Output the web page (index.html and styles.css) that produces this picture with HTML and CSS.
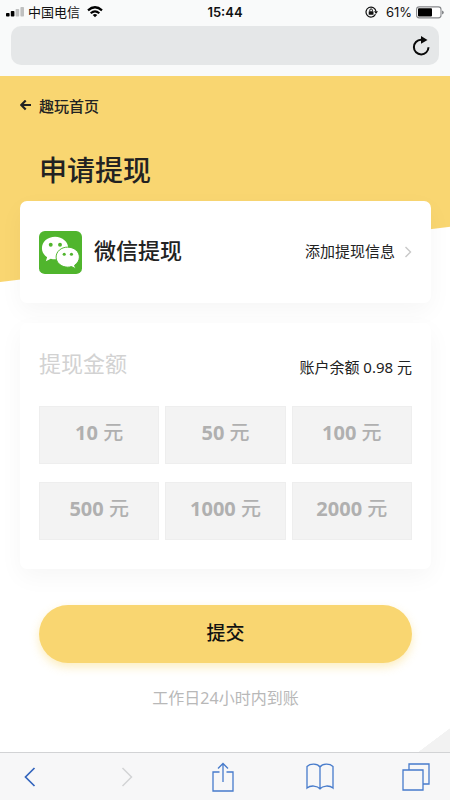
FILE: index.html
```html
<!DOCTYPE html>
<html lang="zh-CN">
<head>
<meta charset="utf-8">
<meta name="viewport" content="width=device-width, initial-scale=1">
<title>申请提现</title>
<link rel="stylesheet" href="styles.css">
</head>
<body>
<header class="browser-top">
  <div class="status">
    <div class="status-side">
      <svg class="signal" width="18" height="10" viewBox="0 0 18 10" aria-hidden="true"><rect x="0" y="6" width="3.600" height="3.500" rx=".8"/><rect x="4.800" y="4" width="3.600" height="5.500" rx=".8"/><g fill="#bfc0c0"><rect x="9.600" y="2" width="3.600" height="7.500" rx=".8"/><rect x="14.400" y="0" width="3.600" height="9.500" rx=".8"/></g></svg>
      <span class="carrier">中国电信</span>
      <svg class="wifi" width="16" height="12" viewBox="0 0 16 12" fill="none" stroke="#000" stroke-width="2.200" aria-hidden="true"><path d="M1 4.300Q8-1.800 15 4.300M3.700 7.200Q8 3.400 12.300 7.200"/><path d="M5.700 8.900Q8 7 10.300 8.900L8 11.300Z" fill="#000" stroke="none"/></svg>
    </div>
    <time class="clock">15:44</time>
    <div class="status-side status-right">
      <svg width="13" height="12" viewBox="0 0 13 12" fill="none" stroke="#111" aria-hidden="true"><path d="M10.500 8.300A5 5 0 1 1 11 5.500" stroke-width="1.200"/><path d="M9 5.300h4L11 8Z" fill="#111" stroke="none"/><path d="M4.800 5.300V4.200a1.300 1.300 0 0 1 2.600 0v1.100"/><rect x="3.700" y="5.200" width="4.800" height="3.600" rx=".5" fill="#111" stroke="none"/></svg>
      <span class="percent">61%</span>
      <svg class="battery" width="28" height="13" viewBox="0 0 28 13" aria-hidden="true"><rect x=".6" y=".9" width="24.400" height="11" rx="2.600" fill="#fff" stroke="#85878a" stroke-width="1.100"/><rect x="2" y="2.300" width="14" height="8.200" rx="1" fill="#000"/><path d="M26 4.400q1.800.4 1.800 2t-1.800 2Z" fill="#85878a"/></svg>
    </div>
  </div>
  <div class="address">
    <button class="icon-button" type="button" aria-label="刷新">
      <svg width="18" height="20" viewBox="0 0 18 20" fill="none" aria-hidden="true"><path d="M11 3.800H9A7.300 7.300 0 1 0 16.500 11.300" stroke="#090909" stroke-width="2"/><path d="M9 0l6.500 3.900L9 7.800Z" fill="#090909"/></svg>
    </button>
  </div>
</header>

<main class="page">
  <a class="back" href="#">
    <svg width="12" height="12" viewBox="0 0 12 12" fill="none" stroke="#222" stroke-width="2.200" aria-hidden="true"><path d="M11 5H1.500M5.700.5L1.200 5l4.500 4.500"/></svg>
    <span>趣玩首页</span>
  </a>
  <h1 class="title">申请提现</h1>

  <a class="card method" href="#">
    <svg class="wechat" width="43" height="43" viewBox="0 0 44 44" aria-hidden="true">
      <rect width="44" height="44" rx="6" fill="#50b52d"/>
      <path d="M16.500 6C8.700 6 3 11.300 3 17.700c0 3.800 2 7 5.300 9.100L7 31l5-2.700c1.500.5 3 .7 4.500.7C24 29 30 24 30 17.700S24 6 16.500 6Z" fill="#fff"/>
      <circle cx="12" cy="14" r="2" fill="#50b52d"/><circle cx="21.500" cy="14" r="2" fill="#50b52d"/>
      <path d="M29.300 16.500c-6.600 0-11.800 4.500-11.800 10.200S22.700 37 29.300 37c1.400 0 2.700-.2 4-.6l4.200 2.300-1.100-3.700c3-2 4.900-5 4.900-8.300 0-5.700-5.300-10.200-12-10.200Z" fill="#fff" stroke="#50b52d"/>
      <circle cx="25.800" cy="23.800" r="1.600" fill="#50b52d"/><circle cx="33.200" cy="23.800" r="1.600" fill="#50b52d"/>
    </svg>
    <span class="method-name">微信提现</span>
    <span class="method-action">添加提现信息</span>
    <svg width="8" height="12" viewBox="0 0 8 12" fill="none" stroke="#c8c8c8" stroke-width="1.400" aria-hidden="true"><path d="M1.500 1L6.500 6l-5 5"/></svg>
  </a>

  <form class="form" id="withdraw">
    <section class="card amounts">
      <div class="amounts-head">
        <h2 class="amounts-title">提现金额</h2>
        <span class="balance">账户余额 0.98 元</span>
      </div>
      <div class="amount-grid">
        <button class="amount" type="button">10 <span class="unit">元</span></button>
        <button class="amount" type="button">50 <span class="unit">元</span></button>
        <button class="amount" type="button">100 <span class="unit">元</span></button>
        <button class="amount" type="button">500 <span class="unit">元</span></button>
        <button class="amount" type="button">1000 <span class="unit">元</span></button>
        <button class="amount" type="button">2000 <span class="unit">元</span></button>
      </div>
    </section>
    <button class="submit" type="submit">提交</button>
  </form>
  <p class="hint">工作日24小时内到账</p>
</main>

<nav class="toolbar">
  <button class="icon-button" type="button" aria-label="后退"><svg width="12" height="20" viewBox="0 0 12 20" fill="none" stroke="#3465bd" stroke-width="1.700"><path d="M10.500 1L1.500 10l9 9"/></svg></button>
  <button class="icon-button" type="button" aria-label="前进"><svg width="12" height="20" viewBox="0 0 12 20" fill="none" stroke="#d2d3d5" stroke-width="1.500"><path d="M1.500 1l9 9-9 9"/></svg></button>
  <button class="icon-button" type="button" aria-label="分享"><svg width="22" height="30" viewBox="0 0 22 30" fill="none" stroke="#477bcb" stroke-width="1.300"><path d="M7.500 10H1v19h20V10h-6.500M11 20V1.500M6 6.500l5-5 5 5"/></svg></button>
  <button class="icon-button" type="button" aria-label="书签"><svg width="28" height="27" viewBox="0 0 28 27" fill="none" stroke="#477bcb" stroke-width="1.300"><path d="M14 4C11.500.5 4.500.2 1 3.500v21.500c3.500-3 10.500-2.500 13 .8 2.500-3.300 9.500-3.800 13-.8V3.500C23.500.2 16.500.5 14 4v21.800"/></svg></button>
  <button class="icon-button" type="button" aria-label="标签页"><svg width="28" height="28" viewBox="0 0 28 28" fill="none" stroke="#477bcb" stroke-width="1.300"><path d="M1 7h20v20H1zM7 7V1h20v20h-6"/></svg></button>
</nav>
</body>
</html>
```
FILE: styles.css
```css
* {
  box-sizing: border-box;
}

body {
  margin: 0;
  min-height: 100vh;
  display: flex;
  flex-direction: column;
  color: #222;
  background: #fff;
  font-family: "Noto Sans CJK SC", sans-serif;
  font-size: 15px;
  line-height: 24px;
}

a {
  color: inherit;
  text-decoration: none;
}

button {
  margin: 0;
  padding: 0;
  border: 0;
  font: inherit;
  cursor: pointer;
}

svg {
  display: block;
  flex: none;
}

.browser-top {
  padding-bottom: 11px;
  background: #f9fafa;
}

.status {
  display: flex;
  align-items: center;
  height: 26px;
  padding: 0 6px 2px;
  color: #111;
  font-size: 13px;
}

.status-side {
  display: flex;
  flex: 1;
  align-items: center;
  gap: 4px;
}

.status-right {
  justify-content: flex-end;
}

.wifi {
  margin-left: 3px;
}

.clock {
  font-family: Inter, sans-serif;
  font-weight: 600;
}

.percent {
  margin-left: 4px;
  font-family: Inter, sans-serif;
}

.address {
  display: flex;
  align-items: center;
  justify-content: flex-end;
  height: 39px;
  margin: 0 11px;
  padding-right: 9px;
  border-radius: 10px;
  background: #e5e7e8;
}

.icon-button {
  display: flex;
  justify-content: center;
  background: none;
}

.page {
  flex: 1;
  padding: 18px 19px 40px 20px;
  background:
    linear-gradient(to bottom right, transparent 50%, #f2f2f2 51%) right bottom / 32px 24px no-repeat,
    linear-gradient(173deg, #f9d671 0 204px, #fff 205px) no-repeat;
}

.back {
  display: flex;
  align-items: center;
  gap: 7px;
  font-weight: 500;
}

.title {
  margin: 32px 19px 12px;
  font-size: 28px;
  font-weight: 500;
  line-height: 39px;
}

.card {
  border-radius: 7px;
  background: #fff;
  box-shadow: 0 8px 24px rgba(0, 0, 0, 0.04);
}

.method {
  display: flex;
  align-items: center;
  height: 102px;
  padding: 0 19px;
}

.method-name {
  margin-left: 12px;
  padding-bottom: 6px;
  font-size: 22px;
  font-weight: 500;
}

.method-action {
  margin-left: auto;
  margin-right: 9px;
  padding-bottom: 2px;
}

.form {
  margin-top: 20px;
}

.amounts {
  padding: 23px 19px 29px;
}

.amounts-head {
  display: flex;
  align-items: flex-start;
  justify-content: space-between;
  height: 60px;
}

.amounts-title {
  margin: 0;
  color: #d2d2d2;
  font-size: 22px;
  font-weight: 400;
  line-height: 32px;
}

.balance {
  margin-top: 9px;
  font-family: "Noto Sans", "Noto Sans CJK SC", sans-serif;
}

.amount-grid {
  display: grid;
  grid-template-columns: repeat(3, 1fr);
  gap: 18px 6px;
}

.amount {
  height: 58px;
  padding-bottom: 4px;
  border: 1px solid #eee;
  background: #f3f3f3;
  color: #b0b0b0;
  font-family: "Noto Sans", "Noto Sans CJK SC", sans-serif;
  font-size: 20px;
  font-weight: 700;
}

.unit {
  font-weight: 500;
}

.submit {
  display: block;
  width: calc(100% - 38px);
  height: 58px;
  margin: 36px 19px 0;
  padding-bottom: 4px;
  border-radius: 29px;
  background: #f9d671;
  box-shadow: 0 4px 10px rgba(249, 214, 113, 0.45);
  color: #111;
  font-size: 19px;
  font-weight: 500;
}

.hint {
  margin: 23px 0 0;
  color: #b8b8b8;
  font-family: "Noto Sans", "Noto Sans CJK SC", sans-serif;
  font-size: 16px;
  text-align: center;
}

.toolbar {
  display: flex;
  align-items: center;
  justify-content: space-between;
  height: 48px;
  padding: 0 20px 0 16px;
  border-top: 1px solid #d2d3d5;
  background: #f7f7f8;
}

.toolbar .icon-button {
  width: 28px;
}
```
